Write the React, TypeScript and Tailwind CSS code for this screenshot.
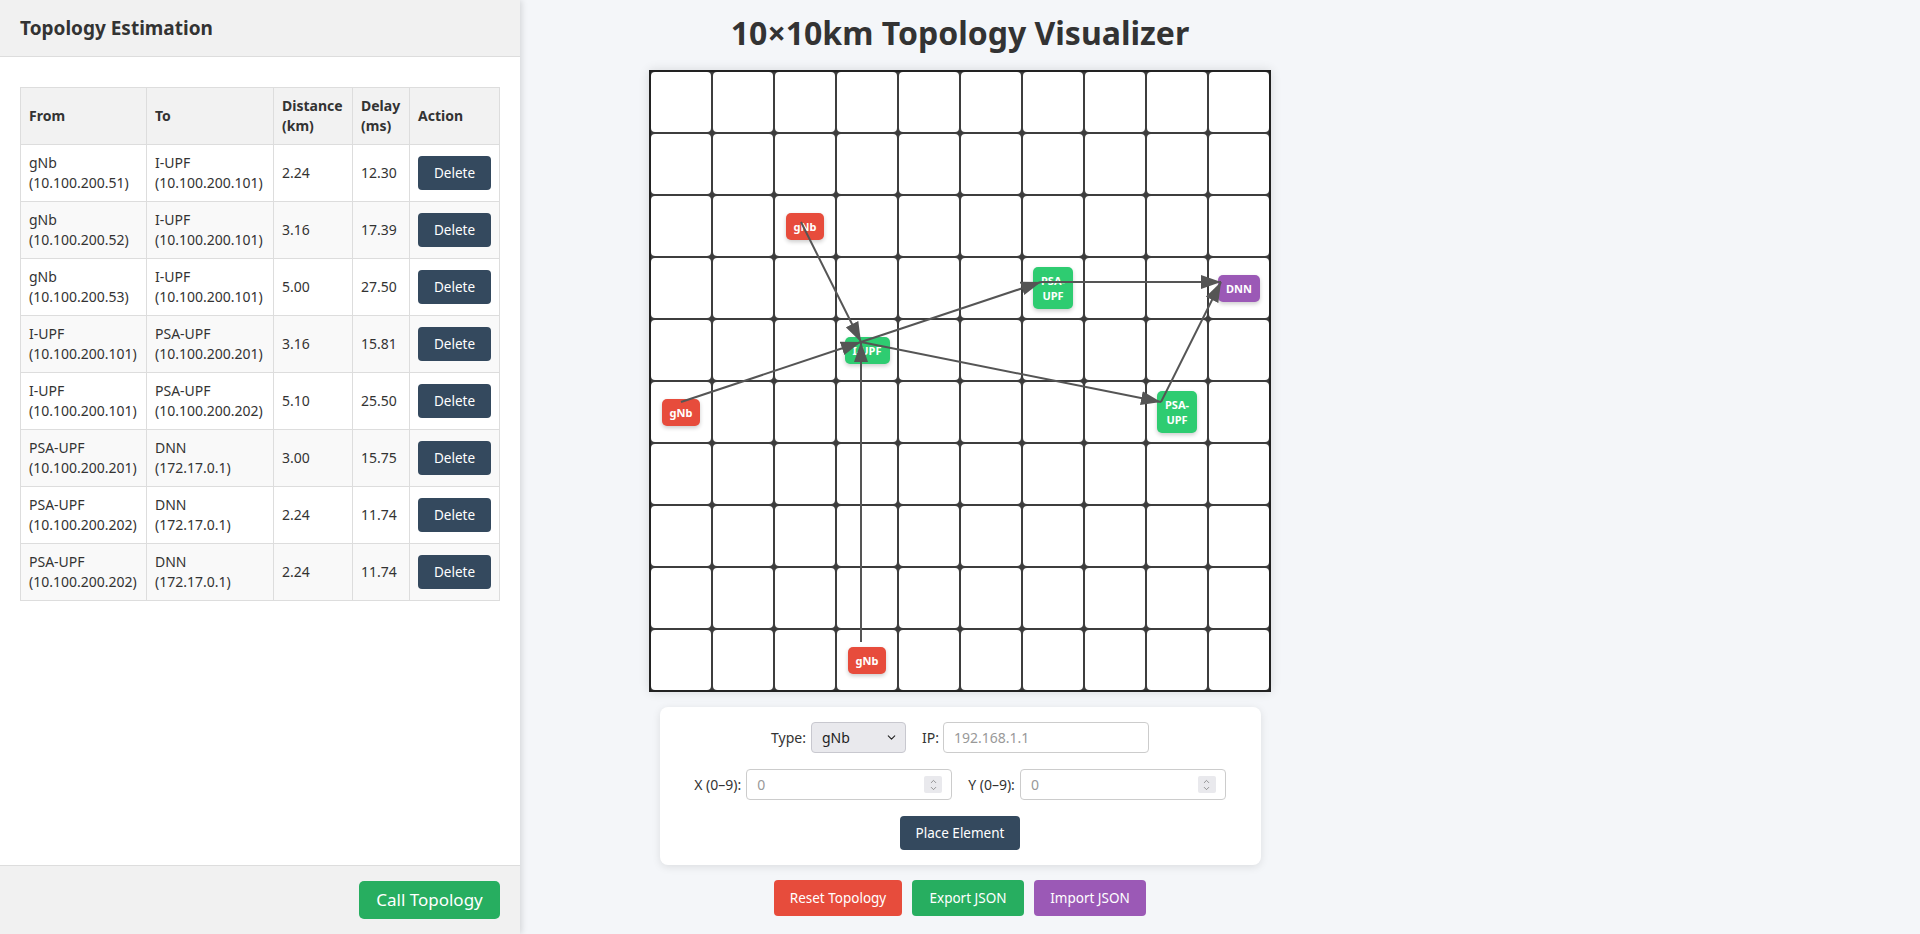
import { ChevronDown, ChevronUp } from "lucide-react";

type NodeType = "gNb" | "I-UPF" | "PSA-UPF" | "DNN";

interface GridNode {
  id: string;
  type: NodeType;
  x: number;
  y: number;
  lines: string[];
}

const nodes: GridNode[] = [
  { id: "g1", type: "gNb", x: 2, y: 2, lines: ["gNb"] },
  { id: "g2", type: "gNb", x: 0, y: 5, lines: ["gNb"] },
  { id: "g3", type: "gNb", x: 3, y: 9, lines: ["gNb"] },
  { id: "i1", type: "I-UPF", x: 3, y: 4, lines: ["I-UPF"] },
  { id: "p1", type: "PSA-UPF", x: 6, y: 3, lines: ["PSA-", "UPF"] },
  { id: "p2", type: "PSA-UPF", x: 8, y: 5, lines: ["PSA-", "UPF"] },
  { id: "d1", type: "DNN", x: 9, y: 3, lines: ["DNN"] },
];

const edges: [string, string][] = [
  ["g1", "i1"],
  ["g2", "i1"],
  ["g3", "i1"],
  ["i1", "p1"],
  ["i1", "p2"],
  ["p1", "d1"],
  ["p2", "d1"],
];

const nodeColor: Record<NodeType, string> = {
  gNb: "bg-[#e74c3c]",
  "I-UPF": "bg-[#2ecc71]",
  "PSA-UPF": "bg-[#2ecc71]",
  DNN: "bg-[#9b59b6]",
};

const links = [
  ["gNb", "10.100.200.51", "I-UPF", "10.100.200.101", "2.24", "12.30"],
  ["gNb", "10.100.200.52", "I-UPF", "10.100.200.101", "3.16", "17.39"],
  ["gNb", "10.100.200.53", "I-UPF", "10.100.200.101", "5.00", "27.50"],
  ["I-UPF", "10.100.200.101", "PSA-UPF", "10.100.200.201", "3.16", "15.81"],
  ["I-UPF", "10.100.200.101", "PSA-UPF", "10.100.200.202", "5.10", "25.50"],
  ["PSA-UPF", "10.100.200.201", "DNN", "172.17.0.1", "3.00", "15.75"],
  ["PSA-UPF", "10.100.200.202", "DNN", "172.17.0.1", "2.24", "11.74"],
  ["PSA-UPF", "10.100.200.202", "DNN", "172.17.0.1", "2.24", "11.74"],
];

const center = (n: number) => n * 60 + 30;

function NumberField({ label }: { label: string }) {
  return (
    <div className="flex items-center gap-[5px]">
      <label className="text-[14px]">{label}</label>
      <div className="relative">
        <input
          type="text"
          placeholder="0"
          className="h-[31px] w-[206px] rounded-[4px] border border-[#ccc] bg-white pl-[10px] text-[14px] text-[#333] placeholder:text-[#999] outline-none"
        />
        <span className="pointer-events-none absolute right-[10px] top-[7px] flex h-[17px] w-[18px] flex-col items-center justify-center rounded-[2px] bg-[#e9e9ed] text-[#777]">
          <ChevronUp size={9} strokeWidth={2} className="-mb-[1px]" />
          <ChevronDown size={9} strokeWidth={2} className="-mt-[1px]" />
        </span>
      </div>
    </div>
  );
}

export default function App() {
  const byId = Object.fromEntries(nodes.map((n) => [n.id, n]));

  return (
    <div className="flex min-h-screen font-['Noto_Sans',sans-serif] text-[#333]">
      <aside className="z-10 flex h-screen w-[520px] shrink-0 flex-col bg-white shadow-[2px_0_6px_rgba(0,0,0,0.12)]">
        <header className="border-b border-[#ddd] bg-[#f1f1f1] px-5 py-[15px]">
          <h2 className="text-[19px] font-bold leading-[26px]">Topology Estimation</h2>
        </header>

        <div className="flex-1 overflow-auto px-5 pt-[30px]">
          <table className="w-[480px] table-fixed border-collapse text-[14px] leading-5">
            <thead>
              <tr className="bg-[#f2f2f2]">
                <th className="w-[126px] border border-[#ddd] p-2 text-left font-bold">From</th>
                <th className="w-[127px] border border-[#ddd] p-2 text-left font-bold">To</th>
                <th className="w-[79px] border border-[#ddd] p-2 text-left font-bold">Distance (km)</th>
                <th className="w-[57px] border border-[#ddd] p-2 text-left font-bold">Delay (ms)</th>
                <th className="w-[90px] border border-[#ddd] p-2 text-left font-bold">Action</th>
              </tr>
            </thead>
            <tbody>
              {links.map((r, i) => (
                <tr key={i} className={i % 2 === 1 ? "bg-[#f9f9f9]" : "bg-white"}>
                  <td className="border border-[#ddd] p-2 align-middle">
                    {r[0]}
                    <br />({r[1]})
                  </td>
                  <td className="border border-[#ddd] p-2 align-middle">
                    {r[2]}
                    <br />({r[3]})
                  </td>
                  <td className="border border-[#ddd] p-2 align-middle">{r[4]}</td>
                  <td className="border border-[#ddd] p-2 align-middle">{r[5]}</td>
                  <td className="border border-[#ddd] p-2 align-middle">
                    <button className="h-[34px] w-[73px] rounded-[4px] bg-[#34495e] text-[13.5px] text-white">
                      Delete
                    </button>
                  </td>
                </tr>
              ))}
            </tbody>
          </table>
        </div>

        <footer className="flex justify-end border-t border-[#ddd] bg-[#f1f1f1] px-5 py-[15px]">
          <button className="h-[38px] w-[141px] rounded-[5px] bg-[#27ae60] text-[17px] text-white">
            Call Topology
          </button>
        </footer>
      </aside>

      <main className="flex-1 bg-[#f4f6f9]">
        <div className="ml-[120px] flex w-[640px] flex-col items-center pt-[11px]">
          <h1 className="text-[32px] font-bold leading-[44px] text-[#333]">10×10km Topology Visualizer</h1>

          <div className="relative mt-[15px] grid grid-cols-10 gap-[2px] border-2 border-[#222] bg-[#3d3d3d] shadow-[0_0_10px_rgba(0,0,0,0.12)]">
            {Array.from({ length: 100 }, (_, i) => {
              const x = i % 10;
              const y = Math.floor(i / 10);
              const node = nodes.find((n) => n.x === x && n.y === y);
              return (
                <div key={i} className="flex h-[60px] w-[60px] items-center justify-center rounded-[4px] bg-white">
                  {node && (
                    <div
                      className={`${nodeColor[node.type]} rounded-[5px] px-2 py-[6px] text-center text-[11px] font-bold leading-[15px] text-white shadow-[0_2px_4px_rgba(0,0,0,0.2)]`}
                    >
                      {node.lines.map((l) => (
                        <div key={l}>{l}</div>
                      ))}
                    </div>
                  )}
                </div>
              );
            })}
            <svg className="pointer-events-none absolute left-0 top-0 overflow-visible" width={600} height={600}>
              <defs>
                <marker id="arrow" markerWidth="10" markerHeight="7" refX="10" refY="3.5" orient="auto">
                  <polygon points="0 0, 10 3.5, 0 7" fill="#555" />
                </marker>
              </defs>
              {edges.map(([a, b]) => (
                <line
                  key={a + b}
                  x1={center(byId[a].x)}
                  y1={center(byId[a].y)}
                  x2={center(byId[b].x)}
                  y2={center(byId[b].y)}
                  stroke="#555"
                  strokeWidth={2}
                  markerEnd="url(#arrow)"
                />
              ))}
            </svg>
          </div>

          <div className="mt-[15px] flex w-[601px] flex-col items-center gap-4 rounded-[8px] bg-white p-[15px] shadow-[0_2px_8px_rgba(0,0,0,0.1)]">
            <div className="flex items-center gap-4">
              <div className="flex items-center gap-[5px]">
                <label className="text-[14px]">Type:</label>
                <div className="relative">
                  <select className="h-[31px] w-[95px] appearance-none rounded-[4px] border border-[#c8c8cf] bg-[#e9e9ed] pl-[10px] text-[14px] text-[#222] outline-none">
                    <option>gNb</option>
                    <option>I-UPF</option>
                    <option>PSA-UPF</option>
                    <option>DNN</option>
                  </select>
                  <ChevronDown
                    size={13}
                    strokeWidth={2}
                    className="pointer-events-none absolute right-[8px] top-[9px] text-[#222]"
                  />
                </div>
              </div>
              <div className="flex items-center gap-[4px]">
                <label className="text-[14px]">IP:</label>
                <input
                  type="text"
                  placeholder="192.168.1.1"
                  className="h-[31px] w-[206px] rounded-[4px] border border-[#ccc] bg-white pl-[10px] text-[14px] placeholder:text-[#999] outline-none"
                />
              </div>
            </div>
            <div className="flex items-center gap-4">
              <NumberField label="X (0–9):" />
              <NumberField label="Y (0–9):" />
            </div>
            <button className="h-[34px] w-[120px] rounded-[4px] bg-[#34495e] text-[13.5px] text-white">
              Place Element
            </button>
          </div>

          <div className="mt-[15px] flex gap-[10px]">
            <button className="h-[36px] w-[128px] rounded-[4px] bg-[#e74c3c] text-[13.5px] text-white">
              Reset Topology
            </button>
            <button className="h-[36px] w-[112px] rounded-[4px] bg-[#27ae60] text-[13.5px] text-white">
              Export JSON
            </button>
            <button className="h-[36px] w-[112px] rounded-[4px] bg-[#9b59b6] text-[13.5px] text-white">
              Import JSON
            </button>
          </div>
        </div>
      </main>
    </div>
  );
}
